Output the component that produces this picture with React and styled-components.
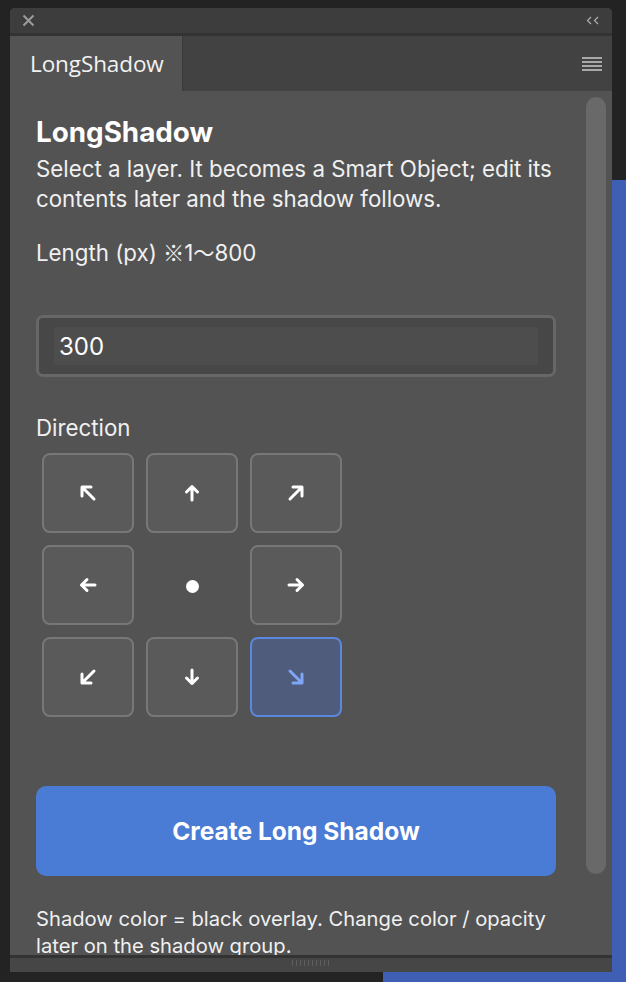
import styled, { createGlobalStyle } from "styled-components";

const GlobalStyle = createGlobalStyle`
  html, body {
    margin: 0;
    padding: 0;
  }
  body {
    width: 626px;
    height: 982px;
    overflow: hidden;
    background:
      linear-gradient(#3e5fb3, #3e5fb3) no-repeat 383px 180px / 243px 802px,
      #232323;
    font-family: Inter, "Noto Sans", sans-serif;
  }
`;

const Page = styled.div`
  padding: 8px 14px 0 10px;
  height: 974px;
`;

const Panel = styled.div`
  width: 602px;
  height: 964px;
  display: flex;
  flex-direction: column;
  background: #535353;
  border-radius: 5px 5px 0 0;
  overflow: hidden;
`;

const TitleBar = styled.div`
  height: 25px;
  flex: none;
  display: flex;
  align-items: center;
  justify-content: space-between;
  padding: 0 12px 0 12px;
  background: #3d3d3d;
  border-bottom: 3px solid #333333;
`;

const TabRow = styled.div`
  height: 55px;
  flex: none;
  display: flex;
  align-items: center;
  background: #424242;
`;

const Tab = styled.div`
  height: 100%;
  width: 173px;
  display: flex;
  align-items: center;
  padding-left: 20px;
  box-sizing: border-box;
  background: #535353;
  border-right: 1px solid #3a3a3a;
  color: #f2f2f2;
  font-family: "Open Sans", sans-serif;
  font-size: 22.5px;
  letter-spacing: -0.1px;
`;

const MenuButton = styled.div`
  margin-left: auto;
  margin-right: 10px;
  display: flex;
  flex-direction: column;
  gap: 2px;
`;

const MenuLine = styled.span`
  display: block;
  width: 20px;
  height: 2px;
  background: #a8a8a8;
`;

const Body = styled.div`
  flex: 1;
  min-height: 0;
  display: flex;
`;

const Content = styled.div`
  flex: 1;
  min-width: 0;
  overflow: hidden;
  padding: 24px 0 0 26px;
  color: #f0f0f0;
`;

const ScrollTrack = styled.div`
  width: 32px;
  flex: none;
  padding-top: 6px;
  box-sizing: border-box;
`;

const ScrollThumb = styled.div`
  width: 20px;
  height: 777px;
  margin-left: 6px;
  border-radius: 10px;
  background: #696969;
`;

const Heading = styled.h1`
  margin: 0;
  font-size: 27.8px;
  font-weight: 700;
  line-height: 34px;
  color: #ffffff;
`;

const Text = styled.p`
  margin: ${(p) => p.$margin || "0"};
  font-size: ${(p) => p.$size || "22.3px"};
  line-height: ${(p) => p.$lh || "30px"};
  height: ${(p) => p.$height || "auto"};
  color: #f0f0f0;
  width: ${(p) => p.$width || "auto"};
`;

const Cjk = styled.span`
  font-family: "Noto Sans CJK JP", sans-serif;
  font-size: 0.95em;
  line-height: 1;
`;

const InputShell = styled.div`
  margin-top: 47px;
  width: 520px;
  height: 62px;
  box-sizing: border-box;
  border: 3px solid #676767;
  border-radius: 7px;
  background: #474747;
  padding: 9px 15px;
`;

const Field = styled.div`
  height: 38px;
  background: #4d4d4d;
  display: flex;
  align-items: center;
  padding-left: 5px;
  font-size: 24px;
  color: #ffffff;
`;

const Grid = styled.div`
  margin: 10px 0 0 6px;
  display: grid;
  grid-template-columns: repeat(3, 92px);
  grid-auto-rows: 80px;
  gap: 12px;
`;

const DirButton = styled.div`
  box-sizing: border-box;
  border-radius: 8px;
  border: 2px solid ${(p) => (p.$active ? "#5b87dc" : "#777777")};
  background: ${(p) => (p.$active ? "#4f5c7c" : "#5a5a5a")};
  color: ${(p) => (p.$active ? "#7ea6f4" : "#ffffff")};
  display: flex;
  align-items: center;
  justify-content: center;
`;

const ArrowSvg = styled.svg`
  width: 20px;
  height: 20px;
  transform: rotate(${(p) => p.$angle}deg);
`;

const Center = styled.div`
  display: flex;
  align-items: center;
  justify-content: center;
`;

const Dot = styled.span`
  width: 13px;
  height: 13px;
  margin-top: 2px;
  border-radius: 50%;
  background: #ffffff;
`;

const CreateButton = styled.div`
  margin-top: 69px;
  width: 520px;
  height: 90px;
  border-radius: 10px;
  background: #4a7bd5;
  display: flex;
  align-items: center;
  justify-content: center;
  color: #ffffff;
  font-size: 24.5px;
  font-weight: 700;
`;

const Divider = styled.div`
  height: 3px;
  flex: none;
  background: #333333;
`;

const BottomBar = styled.div`
  height: 14px;
  flex: none;
  background: #464646;
  display: flex;
  justify-content: center;
  padding-top: 2px;
  box-sizing: border-box;
`;

const Grip = styled.div`
  width: 38px;
  height: 6px;
  background: repeating-linear-gradient(
    90deg,
    #5e5e5e 0 1px,
    transparent 1px 4px
  );
`;

// angle 0 = up, diagonals use the corner shape (0 = up-left)
function Arrow({ angle, diagonal }) {
  return (
    <ArrowSvg viewBox="0 0 20 20" $angle={angle}>
      <g
        fill="none"
        stroke="currentColor"
        strokeWidth="3"
        strokeLinecap="round"
        strokeLinejoin="round"
      >
        {diagonal ? (
          <path d="M4 13V4h9M4.5 4.5L16 16" />
        ) : (
          <path d="M10 17V3.5M4.5 9L10 3.5 15.5 9" />
        )}
      </g>
    </ArrowSvg>
  );
}

const directions = [
  { angle: 0, diagonal: true },
  { angle: 0 },
  { angle: 90, diagonal: true },
  { angle: -90 },
  { center: true },
  { angle: 90 },
  { angle: -90, diagonal: true },
  { angle: 180 },
  { angle: 180, diagonal: true, active: true },
];

function CloseIcon() {
  return (
    <svg width="13" height="13" viewBox="0 0 13 13">
      <path d="M1.5 1.5l10 10M11.5 1.5l-10 10" stroke="#9c9c9c" strokeWidth="2" />
    </svg>
  );
}

function CollapseIcon() {
  return (
    <svg width="14" height="9" viewBox="0 0 14 9">
      <path d="M5 1L1.5 4.5 5 8M12 1L8.5 4.5 12 8" fill="none" stroke="#a8a8a8" strokeWidth="1.3" />
    </svg>
  );
}

export default function App() {
  return (
    <>
      <GlobalStyle />
      <Page>
        <Panel>
          <TitleBar>
            <CloseIcon />
            <CollapseIcon />
          </TitleBar>
          <TabRow>
            <Tab>LongShadow</Tab>
            <MenuButton>
              <MenuLine />
              <MenuLine />
              <MenuLine />
              <MenuLine />
            </MenuButton>
          </TabRow>
          <Body>
            <Content>
              <Heading>LongShadow</Heading>
              <Text $margin="5px 0 0 0" $width="530px">
                Select a layer. It becomes a Smart Object; edit its contents later and the
                shadow follows.
              </Text>
              <Text $margin="24px 0 0 0" $height="30px">
                Length (px) <Cjk>※</Cjk>1<Cjk>〜</Cjk>800
              </Text>
              <InputShell>
                <Field>300</Field>
              </InputShell>
              <Text $margin="36px 0 0 0">Direction</Text>
              <Grid>
                {directions.map(({ angle, diagonal, center, active }, idx) =>
                  center ? (
                    <Center key={idx}>
                      <Dot />
                    </Center>
                  ) : (
                    <DirButton key={idx} $active={active}>
                      <Arrow angle={angle} diagonal={diagonal} />
                    </DirButton>
                  )
                )}
              </Grid>
              <CreateButton>Create Long Shadow</CreateButton>
              <Text $margin="29px 0 0 0" $size="20.2px" $lh="27px" $width="530px">
                Shadow color = black overlay. Change color / opacity later on the shadow
                group.
              </Text>
            </Content>
            <ScrollTrack>
              <ScrollThumb />
            </ScrollTrack>
          </Body>
          <Divider />
          <BottomBar>
            <Grip />
          </BottomBar>
        </Panel>
      </Page>
    </>
  );
}
